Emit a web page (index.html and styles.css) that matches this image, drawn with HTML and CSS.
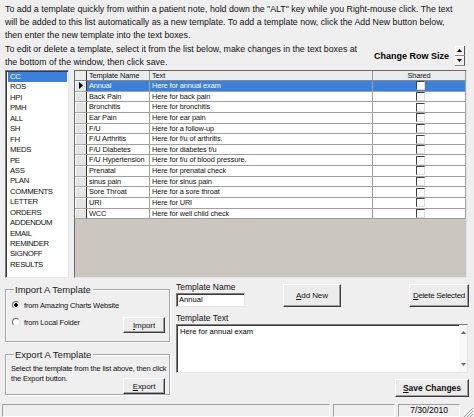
FILE: index.html
```html
<!DOCTYPE html>
<html>
<head>
<meta charset="utf-8">
<link rel="stylesheet" href="styles.css">
</head>
<body>
<div class="win">
  <div class="intro">
    <p class="p1">To add a template quickly from within a patient note, hold down the "ALT" key while you Right-mouse click. The text<br>will be added to this list automatically as a new template. To add a template now, click the Add New button below,<br>then enter the new template into the text boxes.</p>
    <div class="row2">
      <p class="p2">To edit or delete a template, select it from the list below, make changes in the text boxes at<br>the bottom of the window, then click save.</p>
      <span class="crs">Change Row Size</span>
      <div class="spin">
        <div class="sb"><svg width="5" height="3" viewBox="0 0 5 3"><path d="M2.5 0L5 3H0Z" fill="#000"/></svg></div>
        <div class="sb"><svg width="5" height="3" viewBox="0 0 5 3"><path d="M0 0H5L2.5 3Z" fill="#000"/></svg></div>
      </div>
    </div>
  </div>

  <div class="main">
    <ul class="list">
      <li class="sel">CC</li>
      <li>ROS</li>
      <li>HPI</li>
      <li>PMH</li>
      <li>ALL</li>
      <li>SH</li>
      <li>FH</li>
      <li>MEDS</li>
      <li>PE</li>
      <li>ASS</li>
      <li>PLAN</li>
      <li>COMMENTS</li>
      <li>LETTER</li>
      <li>ORDERS</li>
      <li>ADDENDUM</li>
      <li>EMAIL</li>
      <li>REMINDER</li>
      <li>SIGNOFF</li>
      <li>RESULTS</li>
    </ul>
    <div class="grid">
      <div class="dg">
        <div class="hc corner"></div><div class="hc">Template Name</div><div class="hc">Text</div><div class="hc ctr">Shared</div>

        <div class="rh"><svg width="4" height="7" viewBox="0 0 4 7"><path d="M0 0L4 3.5L0 7Z" fill="#000"/></svg></div><div class="c s">Annual</div><div class="c s">Here for annual exam</div><div class="c s ck"><span class="cb"></span></div>
        <div class="rh"></div><div class="c">Back Pain</div><div class="c">Here for back pain</div><div class="c ck"><span class="cb"></span></div>
        <div class="rh"></div><div class="c">Bronchitis</div><div class="c">Here for bronchitis</div><div class="c ck"><span class="cb"></span></div>
        <div class="rh"></div><div class="c">Ear Pain</div><div class="c">Here for ear pain</div><div class="c ck"><span class="cb"></span></div>
        <div class="rh"></div><div class="c">F/U</div><div class="c">Here for a follow-up</div><div class="c ck"><span class="cb"></span></div>
        <div class="rh"></div><div class="c">F/U Arthritis</div><div class="c">Here for f/u of arthritis.</div><div class="c ck"><span class="cb"></span></div>
        <div class="rh"></div><div class="c">F/U Diabetes</div><div class="c">Here for diabetes f/u</div><div class="c ck"><span class="cb"></span></div>
        <div class="rh"></div><div class="c">F/U Hypertension</div><div class="c">Here for f/u of blood pressure.</div><div class="c ck"><span class="cb"></span></div>
        <div class="rh"></div><div class="c">Prenatal</div><div class="c">Here for prenatal check</div><div class="c ck"><span class="cb"></span></div>
        <div class="rh"></div><div class="c">sinus pain</div><div class="c">Here for sinus pain</div><div class="c ck"><span class="cb"></span></div>
        <div class="rh"></div><div class="c">Sore Throat</div><div class="c">Here for a sore throat</div><div class="c ck"><span class="cb"></span></div>
        <div class="rh"></div><div class="c">URI</div><div class="c">Here for URI</div><div class="c ck"><span class="cb"></span></div>
        <div class="rh"></div><div class="c">WCC</div><div class="c">Here for well child check</div><div class="c ck"><span class="cb"></span></div>
      </div>
    </div>
  </div>

  <div class="bottom">
    <div class="leftcol">
      <div class="group imp">
        <div class="gtitle">Import A Template</div>
        <div class="rrow r1"><span class="radio on"></span><span>from Amazing Charts Website</span></div>
        <div class="rrow2">
          <div class="rrow r2"><span class="radio"></span><span>from Local Folder</span></div>
          <button class="btn small"><u>I</u>mport</button>
        </div>
      </div>
      <div class="group exp">
        <div class="gtitle">Export A Template</div>
        <p class="exptext">Select the template from the list above, then click<br>the Export button.</p>
        <button class="btn small expbtn"><u>E</u>xport</button>
      </div>
    </div>
    <div class="rightcol">
      <div class="namerow">
        <div class="nameblk">
          <div class="lbl">Template Name</div>
          <div class="input">Annual</div>
        </div>
        <button class="btn big addnew"><u>A</u>dd New</button>
        <button class="btn big del"><u>D</u>elete Selected</button>
      </div>
      <div class="lbl ttl">Template Text</div>
      <div class="ta">
        <div class="tatext">Here for annual exam</div>
        <div class="vs">
          <svg width="5" height="3" viewBox="0 0 5 3"><path d="M2.5 0L5 3H0Z" fill="#666"/></svg>
          <svg width="5" height="3" viewBox="0 0 5 3"><path d="M0 0H5L2.5 3Z" fill="#666"/></svg>
        </div>
      </div>
      <button class="btn save"><u>S</u>ave Changes</button>
    </div>
  </div>

  <div class="status">
    <div class="panel p1"></div>
    <div class="panel p2"></div>
    <div class="panel p3">7/30/2010</div>
    <svg class="grip" width="10" height="10" viewBox="0 0 10 10">
      <path d="M9 1L1 9M9 4L4 9M9 7L7 9" stroke="#fff" stroke-width="1"/>
      <path d="M10 1L1 10M10 4L4 10M10 7L7 10" stroke="#9a9a9a" stroke-width="1"/>
    </svg>
  </div>
</div>
</body>
</html>
```

FILE: styles.css
```css
html, body {
  margin: 0;
  padding: 0;
}
body {
  background: #efefef;
  font-family: "Liberation Sans", Arial, sans-serif;
  font-size: 8.8px;
  color: #000;
  width: 474px;
  height: 417px;
  overflow: hidden;
}
.win {
  display: flex;
  flex-direction: column;
  height: 417px;
}
.intro {
  padding: 3px 5px 0 5px;
}
.p1, .p2 {
  margin: 0;
  line-height: 13px;
  white-space: nowrap;
  font-size: 8.8px;
  color: #111;
}
.row2 {
  display: flex;
  align-items: center;
  height: 26px;
  margin-top: 1px;
}
.crs {
  font-weight: bold;
  font-size: 9px;
  margin-left: auto;
}
.spin {
  display: flex;
  flex-direction: column;
  width: 10px;
  height: 20px;
  margin-left: 6px;
  margin-right: 4px;
}
.sb {
  flex: 1;
  display: flex;
  align-items: center;
  justify-content: center;
  background: #efefef;
  border-right: 1px solid #555;
  border-bottom: 1px solid #888;
  box-shadow: inset 1px 1px #fff;
}

.main {
  display: flex;
  gap: 5px;
  height: 208px;
  padding: 0 7px 0 5px;
  margin-top: 1px;
}
.list {
  list-style: none;
  margin: 0;
  width: 65px;
  box-sizing: border-box;
  background: #fff;
  border: 1px solid;
  border-color: #7a7a7a #e6e6e6 #e6e6e6 #7a7a7a;
  box-shadow: inset 1px 1px #3a3a3a;
  padding: 1px 1px 0 2px;
  font-size: 7.8px;
  letter-spacing: -0.35px;
  color: #111;
}
.list li {
  height: 10.45px;
  line-height: 10.45px;
  padding-left: 2px;
}
.list li.sel {
  background: #3a80dd;
  color: #fff;
}
.grid {
  flex: 1;
  box-sizing: border-box;
  background: #cbc7c0;
  border: 1px solid;
  border-color: #6a6a6a #e6e6e6 #e6e6e6 #6a6a6a;
}
.dg {
  display: grid;
  grid-template-columns: 12px 63px 223px 93px;
  grid-template-rows: 10px repeat(13, 10.65px);
  font-size: 7.4px;
  letter-spacing: -0.12px;
  color: #111;
}
.dg > div {
  box-sizing: border-box;
  white-space: nowrap;
  overflow: hidden;
}
.hc {
  background: #ececec;
  border-right: 1px solid #9a9a9a;
  border-bottom: 1px solid #8a8a8a;
  line-height: 9px;
  padding-left: 2px;
}
.hc.ctr {
  text-align: center;
  padding-left: 0;
}
.hc.corner {
  border-right: 1px solid #303030;
}
.rh {
  background: #e4e4e4;
  border-right: 1px solid #303030;
  border-bottom: 1px solid #a8a8a8;
  box-shadow: inset 1px 1px #fff;
  display: flex;
  align-items: center;
  justify-content: center;
}
.c {
  background: #fff;
  border-right: 1px solid #a0a0a0;
  border-bottom: 1px solid #a0a0a0;
  padding-left: 2px;
  line-height: 10px;
}
.c.s {
  background: #3a80dd;
  color: #fff;
}
.c.ck {
  display: flex;
  align-items: center;
  justify-content: center;
  padding-left: 0;
}
.cb {
  display: block;
  width: 9px;
  height: 9px;
  box-sizing: border-box;
  background: #fff;
  border: 1px solid;
  border-color: #404040 #dcdcdc #dcdcdc #404040;
  margin-left: 2px;
}

.bottom {
  display: flex;
  gap: 6px;
  height: 124px;
  padding: 4px 5px 0 5px;
  box-sizing: border-box;
}
.leftcol {
  width: 165px;
  display: flex;
  flex-direction: column;
}
.group {
  box-sizing: border-box;
  border: 1px solid #a8a8a8;
  box-shadow: inset 1px 1px #fff, 1px 1px #fff;
  padding: 0 4px 0 5px;
  font-size: 7.5px;
  letter-spacing: -0.15px;
  color: #111;
}
.gtitle {
  font-size: 9.5px;
  letter-spacing: 0;
  line-height: 11px;
  margin: -6px 0 0 3px;
  padding: 0 2px 0 1px;
  background: #efefef;
  width: fit-content;
  color: #222;
}
.imp {
  margin-top: 7px;
  height: 53px;
}
.rrow {
  display: flex;
  align-items: center;
  gap: 4px;
  height: 12px;
}
.r1 {
  margin-top: 4px;
}
.rrow2 {
  display: flex;
  justify-content: space-between;
  align-items: flex-start;
}
.r2 {
  margin-top: 5px;
}
.radio {
  display: block;
  width: 8px;
  height: 8px;
  border-radius: 50%;
  box-sizing: border-box;
  border: 1px solid;
  border-color: #6a6a6a #e8e8e8 #e8e8e8 #6a6a6a;
  background: #fff;
  margin-left: 1px;
}
.radio.on {
  background: radial-gradient(circle, #000 0 1.5px, #fff 2px);
}
.btn {
  font-family: "Liberation Sans", Arial, sans-serif;
  font-size: 8px;
  letter-spacing: -0.1px;
  white-space: nowrap;
  color: #111;
  background: #ececec;
  border: 1px solid;
  border-color: #fff #3a3a3a #3a3a3a #fff;
  box-shadow: inset -1px -1px #a0a0a0;
  padding: 0;
  margin: 0;
  box-sizing: border-box;
}
.btn.small {
  width: 42px;
  height: 16px;
}
.rrow2 .btn {
  margin-top: 6px;
}
.exp {
  margin-top: 12px;
  height: 41px;
  display: flex;
  flex-direction: column;
}
.exptext {
  margin: 4px 0 0;
  line-height: 10px;
  white-space: nowrap;
}
.expbtn {
  align-self: flex-end;
  margin-top: -6px;
}
.rightcol {
  flex: 1;
  display: flex;
  flex-direction: column;
}
.namerow {
  display: flex;
  align-items: flex-end;
}
.nameblk {
  width: 69px;
}
.lbl {
  font-size: 8.5px;
  line-height: 11px;
  color: #111;
}
.input {
  height: 14px;
  box-sizing: border-box;
  background: #fff;
  border: 1px solid;
  border-color: #7a7a7a #e6e6e6 #e6e6e6 #7a7a7a;
  box-shadow: inset 1px 1px #3a3a3a;
  font-size: 7.6px;
  line-height: 12px;
  padding-left: 2px;
}
.btn.big {
  height: 23px;
}
.addnew {
  width: 58px;
  margin-left: 38px;
}
.del {
  width: 60px;
  margin-left: auto;
  letter-spacing: -0.3px;
}
.ttl {
  margin-top: 6px;
}
.ta {
  width: 292px;
  height: 49px;
  box-sizing: border-box;
  background: #fff;
  border: 1px solid;
  border-color: #7a7a7a #e6e6e6 #e6e6e6 #7a7a7a;
  box-shadow: inset 1px 1px #3a3a3a;
  display: flex;
  font-size: 7.6px;
}
.tatext {
  flex: 1;
  padding: 2px 0 0 3px;
  line-height: 10px;
}
.vs {
  width: 8px;
  display: flex;
  flex-direction: column;
  justify-content: space-between;
  align-items: center;
  padding: 6px 0 6px;
  background: #f7f7f7;
}
.btn.save {
  align-self: flex-end;
  width: 74px;
  height: 18px;
  margin-top: 6px;
  font-weight: bold;
  font-size: 8.5px;
  letter-spacing: 0;
}

.status {
  height: 15px;
  display: flex;
  align-items: flex-end;
  gap: 3px;
  padding-left: 2px;
  box-sizing: border-box;
  padding-top: 2px;
}
.panel {
  height: 13px;
  box-sizing: border-box;
  border: 1px solid;
  border-color: #a0a0a0 #fff #fff #a0a0a0;
  font-size: 8.5px;
  line-height: 11px;
  text-align: center;
}
.p1 { width: 329px; }
.p2 { width: 62px; }
.p3 { width: 62px; }
.grip {
  margin-left: auto;
  margin-right: 1px;
}
```
